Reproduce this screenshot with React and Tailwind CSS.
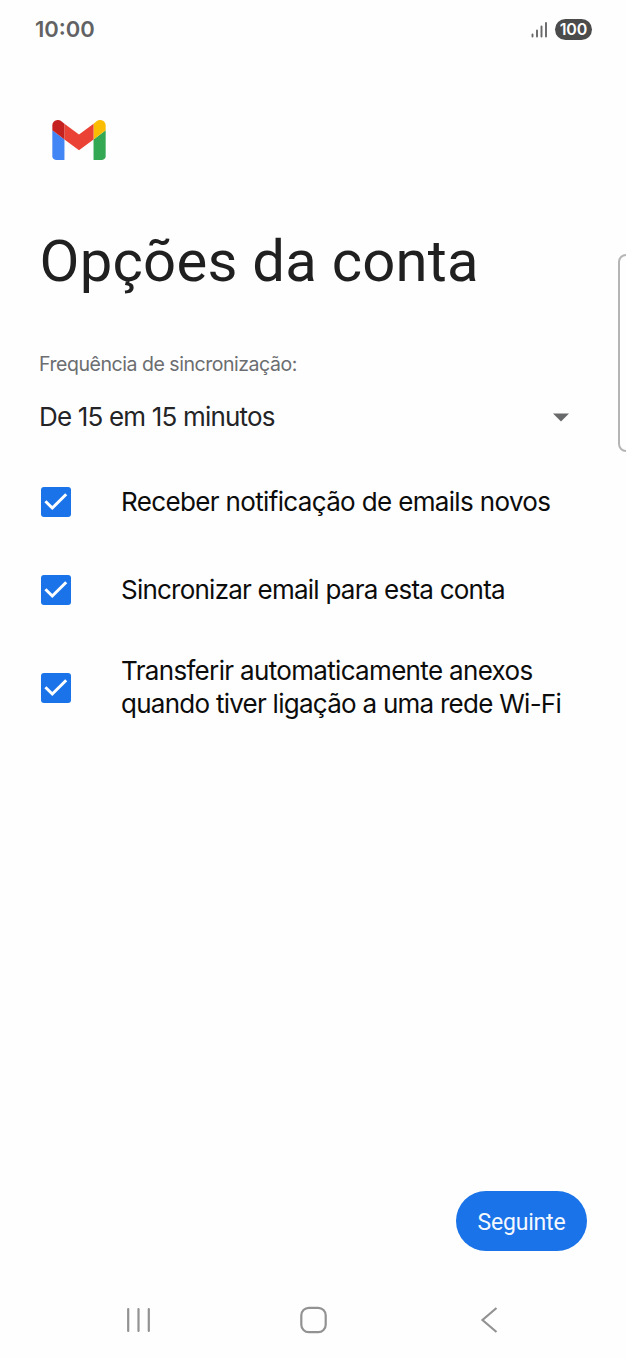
const options = [
  {
    id: 'notify',
    lines: [{ text: 'Receber notificação de emails novos', spacing: 'tracking-[-0.65px]' }],
    row: 'h-[88px]',
  },
  {
    id: 'sync',
    lines: [{ text: 'Sincronizar email para esta conta', spacing: 'tracking-[-0.77px]' }],
    row: 'h-[88px]',
  },
  {
    id: 'download',
    lines: [
      { text: 'Transferir automaticamente anexos', spacing: 'tracking-[-0.67px]' },
      { text: 'quando tiver ligação a uma rede Wi-Fi', spacing: 'tracking-[-0.74px]' },
    ],
    row: 'h-[108px]',
  },
]

function StatusBar() {
  return (
    <header className="flex h-[58px] items-center justify-between pr-[34px] pl-[35px]">
      <span className="font-['Inter',sans-serif] text-[22px] leading-[58px] font-semibold text-[#626264]">10:00</span>
      <div className="flex items-center gap-[7px]">
        <svg width="17" height="17" viewBox="0 0 17 17" stroke="#68686a" strokeWidth="1.9" strokeLinecap="round">
          <path d="M1.5 13.5v2M6 9.5v6M10.5 5.5v10M15 2v13.5" />
        </svg>
        <span className="flex h-[21px] w-[37px] items-center justify-center rounded-full bg-[#4b4b4c] font-['Inter',sans-serif] text-[16px] font-semibold tracking-[-0.1px] text-white">
          100
        </span>
      </div>
    </header>
  )
}

function GmailLogo() {
  return (
    <svg className="ml-[52px] h-[40px] w-[54px]" viewBox="52 42 88 66">
      <path fill="#4285f4" d="M58 108h14V74L52 59v43c0 3.32 2.69 6 6 6" />
      <path fill="#34a853" d="M120 108h14c3.32 0 6-2.69 6-6V59l-20 15" />
      <path fill="#fbbc04" d="M120 48v26l20-15v-8c0-7.42-8.47-11.65-14.4-7.2" />
      <path fill="#ea4335" d="M72 74V48l24 18 24-18v26L96 92" />
      <path fill="#c5221f" d="M52 51v8l20 15V48l-5.6-4.2c-5.94-4.45-14.4-.22-14.4 7.2" />
    </svg>
  )
}

function Checkbox() {
  return (
    <span className="flex h-[30px] w-[30px] shrink-0 items-center justify-center rounded-[3px] bg-[#1a73e8]">
      <svg width="30" height="30" viewBox="0 0 30 30" fill="none" stroke="white" strokeWidth="3">
        <path d="M4.4 14.2L11.3 21L25.2 7.2" />
      </svg>
    </span>
  )
}

function NavBar() {
  return (
    <nav className="flex h-[76px] items-center pl-[125px]">
      <svg width="27" height="28" viewBox="0 0 27 28" stroke="#929292" strokeWidth="2.2" strokeLinecap="round">
        <path d="M3.2 3v22M13.5 3v22M23.8 3v22" />
      </svg>
      <svg className="ml-[147px]" width="28" height="28" viewBox="0 0 28 28" fill="none" stroke="#929292" strokeWidth="2.2">
        <rect x="2.3" y="1.8" width="24.4" height="24.4" rx="7.5" />
      </svg>
      <svg className="ml-[152px]" width="20" height="28" viewBox="0 0 20 28" fill="none" stroke="#929292" strokeWidth="2.2">
        <path d="M17.5 2L3.5 14L17.5 26" />
      </svg>
    </nav>
  )
}

export default function App() {
  return (
    <div className="relative flex h-[1358px] w-[626px] flex-col overflow-hidden bg-[#fefefe] font-['Inter',sans-serif]">
      <StatusBar />

      <main className="flex flex-1 flex-col pt-[62px]">
        <GmailLogo />
        <h1 className="mt-[66px] ml-[39.5px] font-['Roboto',sans-serif] text-[58px] leading-[70px] tracking-[0.25px] whitespace-nowrap text-[#202020]">
          Opções da conta
        </h1>

        <p className="mt-[52px] ml-[39px] text-[19.5px] leading-[32px] tracking-[-0.46px] text-[#6b6d70]">
          Frequência de sincronização:
        </p>
        <div className="mt-[17px] flex h-[40px] items-center justify-between pr-[57px] pl-[39px]">
          <span className="text-[26px] leading-[40px] tracking-[-0.82px] text-[#242426]">De 15 em 15 minutos</span>
          <svg width="16" height="9" viewBox="0 0 16 9" fill="#68696a">
            <path d="M0 0.5h16L8 8.5z" />
          </svg>
        </div>

        <ul className="mt-[21px]">
          {options.map((option) => (
            <li key={option.id} className={`flex items-center gap-[50px] pl-[41px] ${option.row}`}>
              <Checkbox />
              <div className="flex flex-col pb-[2px] text-[26px] leading-[33px] text-[#0c0c0c]">
                {option.lines.map((line) => (
                  <span key={line.text} className={`whitespace-nowrap ${line.spacing}`}>
                    {line.text}
                  </span>
                ))}
              </div>
            </li>
          ))}
        </ul>

        <button className="mt-auto mr-[39px] mb-[31px] h-[60px] w-[131px] self-end rounded-full bg-[#1a73e8] pt-[4px] font-['Roboto',sans-serif] text-[23px] tracking-[-0.2px] text-[#f4f8ff]">
          Seguinte
        </button>
      </main>

      <NavBar />

      {/* edge panel handle */}
      <div className="absolute top-[254px] -right-[10px] h-[198px] w-[18px] rounded-[8px] border-2 border-[#b5b5b5]" />
    </div>
  )
}
